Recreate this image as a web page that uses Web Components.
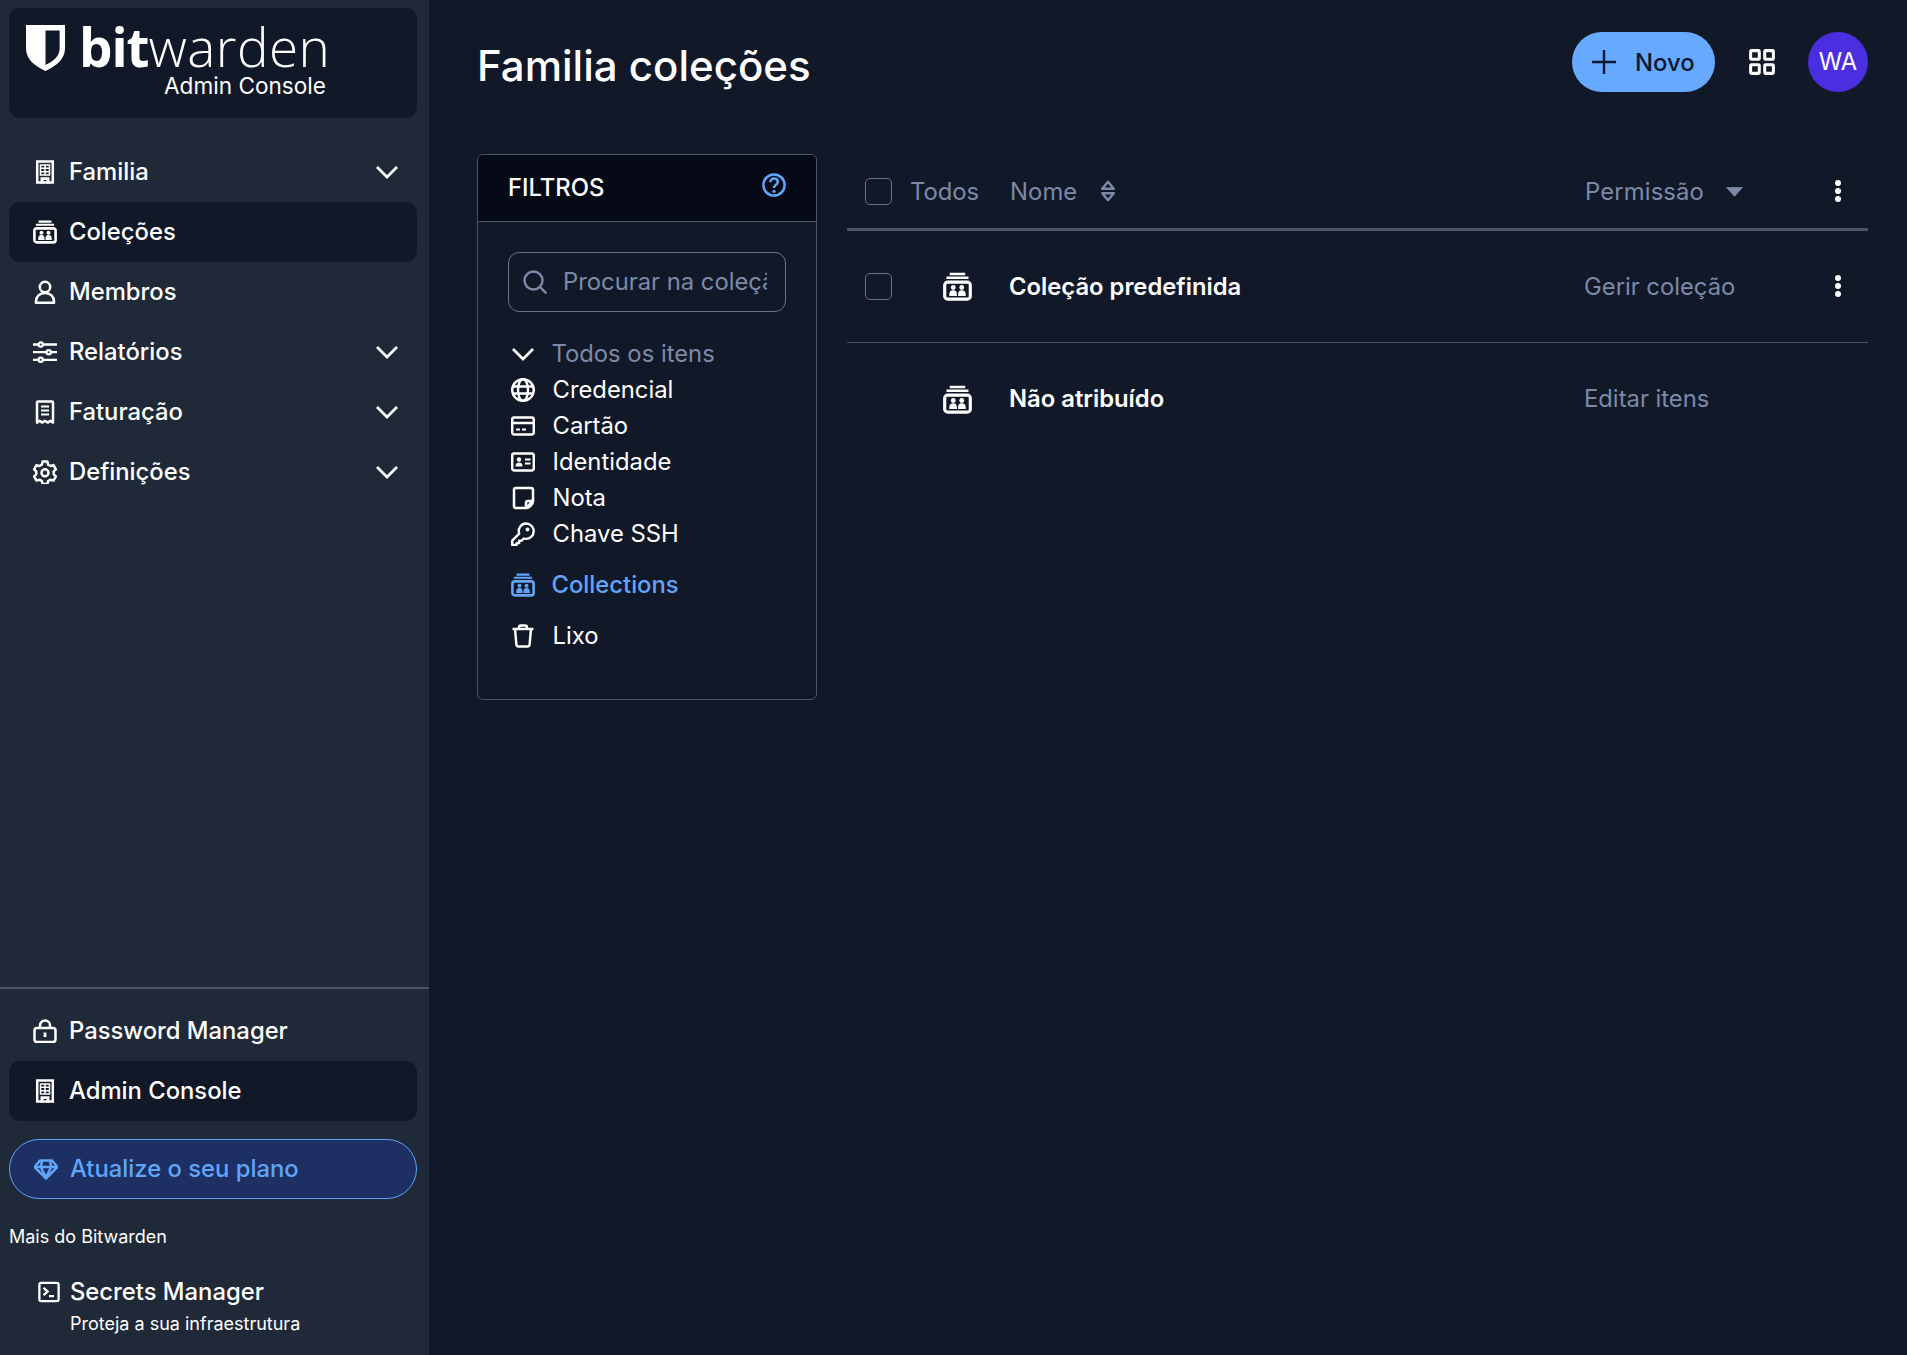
<!DOCTYPE html>
<html lang="pt">
<head>
<meta charset="utf-8">
<title>Familia coleções</title>
<style>
html,body{margin:0;padding:0;height:100%;background:#111827;color:#fff;font-family:Inter,"Noto Sans",sans-serif;}
</style>
</head>
<body>
<bw-app>
  <bw-sidebar slot="side"></bw-sidebar>
  <bw-main slot="main"></bw-main>
</bw-app>
<script>
const ICONS = {
  building:`<path d="M4.200 1.500h15.600v21H4.200z" fill="none" stroke="currentColor" stroke-width="2.500"/><path d="M7.500 5h9v10h-9zM7.500 8.300h9M7.500 11.700h9M12 5v10" stroke="currentColor" stroke-width="1.500" fill="none"/><path fill-rule="evenodd" d="M7.500 23.500v-6.300h9v6.300zM10.600 23.500h2.800v-3.400h-2.800z" fill="currentColor"/>`,
  collection:`<path d="M5.600 1.600h12.800M2.900 4.800h18.200" stroke="currentColor" stroke-width="2.100" fill="none"/><rect x="1.400" y="8.400" width="21.200" height="14" rx="2.400" fill="none" stroke="currentColor" stroke-width="2.600"/><circle cx="8.500" cy="12.800" r="2" fill="currentColor"/><circle cx="15.500" cy="12.800" r="2" fill="currentColor"/><path d="M5.200 19.900v-1.500c0-2.100 1.300-3.300 3.300-3.300s3 1.200 3 3.300v1.500zM12.500 19.900v-1.500c0-2.100 1-3.300 3-3.300s3.300 1.200 3.300 3.300v1.500z" fill="currentColor"/>`,
  user:`<g fill="none" stroke="currentColor" stroke-width="2.500"><circle cx="12" cy="7" r="5.200"/><path d="M3 22.800v-1.600c0-4.600 3.600-8.200 9-8.200s9 3.600 9 8.200v1.600z" stroke-linejoin="round"/></g>`,
  sliders:`<g fill="none" stroke="currentColor" stroke-width="2.300"><path d="M0 4.500h5.200M10.200 4.500H24M0 12.200h13.200M18.200 12.200H24M0 19.800h5.200M10.200 19.800H24"/><circle cx="7.700" cy="4.500" r="2.100"/><circle cx="15.700" cy="12.200" r="2.100"/><circle cx="7.700" cy="19.800" r="2.100"/></g>`,
  receipt:`<path d="M4 2.600c0-.5.400-1 1-1h14c.6 0 1 .500 1 1v20l-2.600-1.800-2.600 1.800-2.800-1.800-2.800 1.800-2.600-1.800L4 22.600z" stroke-linejoin="round" fill="none" stroke="currentColor" stroke-width="2.500"/><path d="M8 6.500h8M8 10.500h8M8 14.500h8" stroke="currentColor" stroke-width="2.100" fill="none"/>`,
  gear:`<g fill="none" stroke="currentColor" stroke-width="2.500" stroke-linejoin="round"><path d="M9.600 1.600h4.800l.7 3 2.500 1.400 2.900-.9 2.400 4.200-2.200 2.100v2.900l2.200 2.100-2.400 4.200-2.900-.9-2.500 1.400-.7 3H9.600l-.7-3-2.500-1.400-2.900.9L1.100 16.400l2.200-2.100v-2.900L1.100 9.300l2.400-4.200 2.900.9 2.500-1.400z"/><circle cx="12" cy="12.800" r="3.500"/></g>`,
  lock:`<g fill="none" stroke="currentColor" stroke-width="2.500"><rect x="1.500" y="9" width="21" height="14" rx="2.500"/><path d="M7 9V6.500a5 5 0 0 1 10 0V9"/></g><path d="M12 13.500v4.500" stroke="currentColor" stroke-width="2.800"/>`,
  diamond:`<g fill="none" stroke="currentColor" stroke-width="2.500" stroke-linejoin="round"><path d="M6 3.500h12L23.400 10 12 21.500.6 10z"/><path d="M.8 10h22.400M8 3.800 6.800 10 12 20.500 17.200 10 16 3.800"/></g>`,
  terminal:`<g fill="none" stroke="currentColor" stroke-width="2.500"><rect x="1.500" y="2" width="21" height="20" rx="2"/><path d="M6 7.500l4.500 4-4.500 4M12 16.500h5.500"/></g>`,
  globe:`<g fill="none" stroke="currentColor" stroke-width="2.400"><circle cx="12" cy="12" r="10.800"/><ellipse cx="12" cy="12" rx="5" ry="10.800"/><path d="M1.500 8.500h21M1.500 15.500h21"/></g>`,
  card:`<g fill="none" stroke="currentColor" stroke-width="2.500"><rect x="1.200" y="3.500" width="21.600" height="17" rx="2"/><path d="M1 9h22"/><path d="M5 15.500h4M11 15.500h4" stroke-width="2.200"/></g>`,
  idcard:`<rect x="1.200" y="3.500" width="21.600" height="17" rx="2" fill="none" stroke="currentColor" stroke-width="2.500"/><circle cx="8" cy="9.500" r="2.200" fill="currentColor"/><path d="M4.500 16.500c0-2.600 1.300-4 3.500-4s3.500 1.400 3.500 4z" fill="currentColor"/><path d="M14 9.500h5.500M14 13.500h5.500" stroke="currentColor" stroke-width="2.100" fill="none"/>`,
  note:`<g fill="none" stroke="currentColor" stroke-width="2.500" stroke-linejoin="round"><path d="M22 15V4a2 2 0 0 0-2-2H5a2 2 0 0 0-2 2v16a2 2 0 0 0 2 2h10z"/><path d="M22 15h-5a2 2 0 0 0-2 2v5c3 0 7-3.500 7-7z"/></g>`,
  key:`<path d="M15 1.500a7.700 7.700 0 0 1 0 15.400c-.8 0-1.600-.1-2.300-.4l-2 2.100H8.200v2.500H5.600V23H1.200v-4.300l7-7a7.700 7.700 0 0 1 6.800-10.200z" fill="none" stroke="currentColor" stroke-width="2.400" stroke-linejoin="round"/><circle cx="16.500" cy="7.500" r="2" fill="currentColor"/>`,
  trash:`<g fill="none" stroke="currentColor" stroke-width="2.500" stroke-linejoin="round"><path d="M1.500 5h21"/><path d="M8 5V3.500c0-1 .8-2 2-2h4c1.200 0 2 1 2 2V5"/><path d="M4 5l1.400 15.500c.1 1.200 1 2 2.100 2h9c1.100 0 2-.8 2.100-2L20 5"/></g>`,
  chevron:`<path d="M2 7l10 10L22 7" fill="none" stroke="currentColor" stroke-width="2.700"/>`,
  plus:`<path d="M12 0v24M0 12h24" stroke="currentColor" stroke-width="2.400" fill="none"/>`,
  grid:`<g fill="none" stroke="currentColor" stroke-width="2.800"><rect x="1.500" y="1.500" width="8" height="8" rx=".8"/><rect x="14.500" y="1.500" width="8" height="8" rx=".8"/><rect x="1.500" y="14.500" width="8" height="8" rx=".8"/><rect x="14.500" y="14.500" width="8" height="8" rx=".8"/></g>`,
  kebab:`<circle cx="12" cy="4" r="3" fill="currentColor"/><circle cx="12" cy="12" r="3" fill="currentColor"/><circle cx="12" cy="20" r="3" fill="currentColor"/>`,
  sort:`<path d="M6.200 9.700 12 2.800l5.800 6.900zM6.200 14.300h11.600L12 21.200z" fill="none" stroke="currentColor" stroke-width="2.400" stroke-linejoin="round"/>`,
  caret:`<path d="M2 7h20L12 18z" fill="currentColor" stroke="currentColor" stroke-linejoin="round"/>`,
  search:`<g fill="none" stroke="currentColor" stroke-width="2.400"><circle cx="10.500" cy="10.500" r="9"/><path d="M17 17l6.500 6.500"/></g>`,
  help:`<g fill="none" stroke="currentColor" stroke-width="2.500"><circle cx="12" cy="12" r="10.600"/><path d="M8.300 9.200c0-2.200 1.600-3.600 3.800-3.600s3.700 1.400 3.700 3.300c0 3-3.800 2.900-3.800 6"/></g><circle cx="12" cy="18.300" r="1.600" fill="currentColor"/>`
};
const svg = (name,size=24,h)=>`<svg xmlns="http://www.w3.org/2000/svg" viewBox="0 0 24 24" width="${size}" height="${h||size}" aria-hidden="true" style="display:block;flex:none">${ICONS[name]}</svg>`;

function define(tag, html){
  customElements.define(tag, class extends HTMLElement{
    constructor(){ super(); this.attachShadow({mode:'open'}); }
    connectedCallback(){
      this.shadowRoot.innerHTML = typeof html==='function'?html(this):html;
    }
  });
}
const FS='23.800px';

define('bw-app',`<style>
:host{display:grid;grid-template-columns:429px 1fr;height:100vh;overflow:hidden;background:#111827;}
</style><slot name="side"></slot><slot name="main"></slot>`);

define('bw-logo',`<style>
:host{display:flex;flex-direction:column;align-items:flex-start;margin:8px 12px 0 9px;height:110px;width:408px;box-sizing:border-box;padding:9px 0 0 17px;background:#111827;border-radius:11px;color:#fff;}
.top{display:flex;align-items:flex-start;gap:14px;}
.word{font-family:"Open Sans",sans-serif;font-size:53px;line-height:48px;height:48px;margin-top:6px;white-space:nowrap}
b{font-weight:700;letter-spacing:-1.100px}
i{font-style:normal;font-weight:300;letter-spacing:.5px}
.sub{font-family:Inter,sans-serif;font-size:22.600px;line-height:28px;margin:.5px 0 0 138px;white-space:nowrap}
svg{display:block;margin-top:8px}
</style>
<div class="top"><svg viewBox="0 0 40 47" width="39" height="46"><path fill="#fff" fill-rule="evenodd" d="M0 0h40v24c0 11-9 18-20 23C9 42 0 35 0 24zM20 5.500v35.500c8-4 14.500-9 14.500-17V5.500z"/></svg><div class="word"><b>bit</b><i>warden</i></div></div>
<div class="sub">Admin Console</div>`);

define('bw-nav-item',(h)=>{
  const active=h.hasAttribute('active'), chev=h.hasAttribute('chevron');
  return `<style>
:host{display:flex;align-items:center;height:60px;margin:0 12px 0 9px;width:408px;border-radius:11px;box-sizing:border-box;padding-left:24px;color:#fff;font:500 ${FS}/30px Inter,sans-serif;background:${active?'#111827':'transparent'};}
.i{width:24px;height:24px;margin-right:12px;flex:none}
span{flex:1;white-space:nowrap;}
.c{margin-right:18px}
</style><div class="i">${svg(h.getAttribute('icon'))}</div><span><slot></slot></span>${chev?`<div class="c">${svg('chevron',24)}</div>`:''}`;
});

define('bw-upgrade',`<style>
:host{display:flex;align-items:center;box-sizing:border-box;height:60px;width:408px;margin:18px 12px 0 9px;padding-left:24px;border:1.500px solid #60a5fa;border-radius:30px;background:#1e2f63;color:#60a5fa;font:500 ${FS}/30px Inter,sans-serif;}
.i{margin-right:12px}
</style><div class="i">${svg('diamond',24)}</div><span><slot></slot></span>`);

define('bw-product',`<style>
:host{display:flex;align-items:flex-start;margin:27px 0 0 38px;color:#fff;}
.i{margin:5px 10px 0 0}
.t{font:500 ${FS}/32px Inter,sans-serif}
.s{font:400 18px/24px Inter,sans-serif;margin-top:4px}
</style><div class="i">${svg('terminal',22)}</div><div><div class="t">Secrets Manager</div><div class="s">Proteja a sua infraestrutura</div></div>`);

define('bw-sidebar',`<style>
:host{display:flex;flex-direction:column;height:100vh;background:#1f2937;color:#fff;font-family:Inter,sans-serif;box-sizing:border-box;}
nav{margin-top:24px}
.grow{flex:1}
hr{border:0;height:2px;background:#4b5563;margin:0 0 12px;}
.more{font:400 18px/24px Inter,sans-serif;margin:26px 0 0 9px}
</style>
<bw-logo></bw-logo>
<nav>
<bw-nav-item icon="building" chevron>Familia</bw-nav-item>
<bw-nav-item icon="collection" active>Coleções</bw-nav-item>
<bw-nav-item icon="user">Membros</bw-nav-item>
<bw-nav-item icon="sliders" chevron>Relatórios</bw-nav-item>
<bw-nav-item icon="receipt" chevron>Faturação</bw-nav-item>
<bw-nav-item icon="gear" chevron>Definições</bw-nav-item>
</nav>
<div class="grow"></div>
<hr>
<bw-nav-item icon="lock">Password Manager</bw-nav-item>
<bw-nav-item icon="building" active>Admin Console</bw-nav-item>
<bw-upgrade>Atualize o seu plano</bw-upgrade>
<div class="more">Mais do Bitwarden</div>
<bw-product></bw-product>
<div style="height:19px"></div>`);

define('bw-header',`<style>
:host{display:flex;align-items:center;height:60px;margin-top:32px;}
h1{margin:4px 0 0;flex:1;align-self:flex-start;font:500 42px/60px Inter,sans-serif;color:#fff;white-space:nowrap}
.new{display:flex;align-items:center;box-sizing:border-box;height:60px;width:143px;padding-left:20px;background:#66a9ff;border-radius:30px;color:#0b1730;font:500 ${FS}/30px Inter,sans-serif;}
.new svg{margin-right:19px}
.new span{padding-top:2px}
.grid{margin:0 33px 0 34px;color:#fff}
.av{width:60px;height:60px;border-radius:50%;background:#4a2ee0;color:#fff;display:flex;align-items:center;justify-content:center;font:400 ${FS}/30px Inter,sans-serif}
</style><h1><slot></slot></h1>
<div class="new">${svg('plus',24)}<span>Novo</span></div>
<div class="grid">${svg('grid',26)}</div>
<div class="av">WA</div>`);

define('bw-filter-row',(h)=>{
  const color=h.getAttribute('color')||'#fff', mt=h.getAttribute('mt')||0;
  return `<style>
:host{display:flex;align-items:center;height:36px;color:${color};font:400 ${FS}/30px Inter,sans-serif;margin-top:${mt}px;}
.i{width:24px;margin-right:${h.getAttribute('gap')||17.5}px;color:${h.getAttribute('icon-color')||color}}
</style><div class="i">${svg(h.getAttribute('icon'))}</div><span><slot></slot></span>`;
});

define('bw-filters',`<style>
:host{display:block;width:340px;height:546px;flex:none;box-sizing:border-box;border:1.500px solid #4b5563;border-radius:6px;overflow:hidden;}
header{display:flex;align-items:center;justify-content:space-between;height:67px;box-sizing:border-box;padding:0 30px 0 30px;background:#060a17;border-bottom:1.500px solid #4b5563;color:#fff;font:500 ${FS}/30px Inter,sans-serif}
header div{color:#60a5fa;margin-top:-6px}
.search{display:flex;align-items:center;box-sizing:border-box;height:60px;margin:30px 30px 0;padding-left:14px;border:1.500px solid #6b7280;border-radius:11px;color:#7c8aa8;font:400 ${FS}/30px Inter,sans-serif}
.search svg{margin-right:16px}
.search span{display:block;width:204px;overflow:hidden;white-space:nowrap}
.list{margin:24px 0 0 33px}
</style>
<header><span>FILTROS</span><div>${svg('help',24)}</div></header>
<div class="search">${svg('search',24)}<span>Procurar na coleção</span></div>
<div class="list">
<bw-filter-row icon="chevron" color="#7c8aa8" icon-color="#fff" gap="16.5">Todos os itens</bw-filter-row>
<bw-filter-row icon="globe">Credencial</bw-filter-row>
<bw-filter-row icon="card">Cartão</bw-filter-row>
<bw-filter-row icon="idcard">Identidade</bw-filter-row>
<bw-filter-row icon="note">Nota</bw-filter-row>
<bw-filter-row icon="key">Chave SSH</bw-filter-row>
<bw-filter-row icon="collection" color="#60a5fa" mt="15" gap="16.5" style="font-weight:500">Collections</bw-filter-row>
<bw-filter-row icon="trash" mt="15">Lixo</bw-filter-row>
</div>`);

define('bw-check',`<style>
:host{display:block;box-sizing:border-box;width:27px;height:27px;border:1.500px solid #6b7280;border-radius:5px;flex:none}
</style>`);

define('bw-table-row',(h)=>{
  const head=h.hasAttribute('head');
  const border=head?'3px solid #4b5563':(h.hasAttribute('last')?'0':'1.500px solid #4b5563');
  return `<style>
:host{display:grid;grid-template-columns:163px 1fr 224px 60px;align-items:center;height:${h.getAttribute('height')}px;box-sizing:border-box;border-bottom:${border};font:400 ${FS}/30px Inter,sans-serif;color:#7c8aa8;}
.a{display:flex;align-items:center;padding-left:18px;}
.n{color:#fff;font-weight:600;margin-left:-1px;}
.k{display:flex;justify-content:center;color:#fff}
.k svg{margin-top:${head?0:-1}px}
</style><div class="a"><slot name="a"></slot></div><div class="n"><slot name="n"></slot></div><div class="p"><slot name="p"></slot></div><div class="k">${h.hasAttribute('nokebab')?'':svg('kebab',24)}</div>`;
});

define('bw-cell-all',`<style>
:host{display:flex;align-items:center;color:#7c8aa8;}
span{margin-left:18px;padding-top:2px}
</style><bw-check></bw-check><span>Todos</span>`);

define('bw-cell-icon',(h)=>`<style>
:host{display:flex;align-items:center;width:107px}
.s{flex:none;width:27px}
.i{margin-left:51px;color:#fff}
</style><div class="s">${h.hasAttribute('check')?'<bw-check></bw-check>':''}</div><div class="i">${svg('collection',29)}</div>`);

define('bw-sort-head',(h)=>`<style>
:host{display:flex;align-items:center;color:#7c8aa8;font-weight:400}
.i{margin-left:${h.getAttribute('gap')||20}px;}
span{padding-top:2px;letter-spacing:${h.getAttribute('ls')||0}px}
</style><span><slot></slot></span><div class="i">${svg(h.getAttribute('icon'),h.getAttribute('size')||24)}</div>`);

define('bw-table',`<style>
:host{display:block;flex:1;min-width:0}
</style>
<bw-table-row head height="77">
  <bw-cell-all slot="a"></bw-cell-all>
  <bw-sort-head slot="n" icon="sort" size="24" gap="19" ls=".1" style="margin-left:1px">Nome</bw-sort-head>
  <bw-sort-head slot="p" icon="caret" size="19" gap="21" ls=".15" style="margin-left:1px">Permissão</bw-sort-head>
</bw-table-row>
<bw-table-row height="112">
  <bw-cell-icon slot="a" check></bw-cell-icon>
  <span slot="n">Coleção predefinida</span>
  <span slot="p">Gerir coleção</span>
</bw-table-row>
<bw-table-row height="112" last nokebab>
  <bw-cell-icon slot="a"></bw-cell-icon>
  <span slot="n">Não atribuído</span>
  <span slot="p">Editar itens</span>
</bw-table-row>`);

define('bw-main',`<style>
:host{display:block;box-sizing:border-box;height:100vh;padding:0 39px 0 48px;background:#111827;color:#fff;}
.content{display:flex;gap:30px;margin-top:62px;}
</style>
<bw-header>Familia coleções</bw-header>
<div class="content"><bw-filters></bw-filters><bw-table></bw-table></div>`);
</script>
</body>
</html>
